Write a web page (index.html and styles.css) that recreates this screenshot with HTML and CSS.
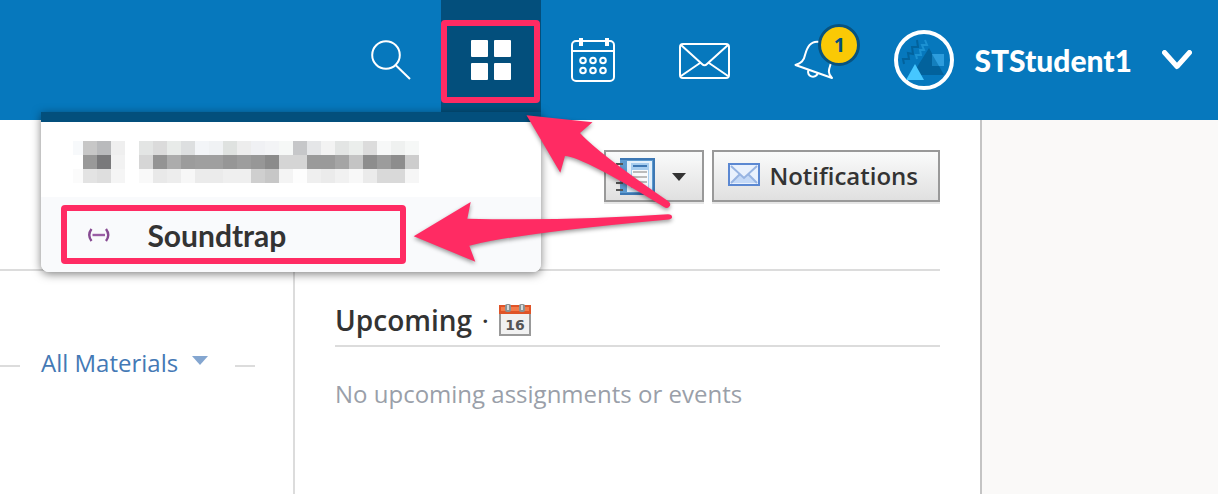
FILE: index.html
```html
<!DOCTYPE html>
<html lang="en">
<head>
  <meta charset="UTF-8">
  <meta name="viewport" content="width=device-width, initial-scale=1.0">
  <title>Course Materials</title>
  <link rel="stylesheet" href="styles.css">
</head>
<body>
  <header class="topbar">
    <nav class="nav">
      <button class="nav-btn search-btn" aria-label="Search">
        <svg width="40" height="40" viewBox="0 0 40 40" fill="none" stroke="#fff" stroke-width="2">
          <circle cx="15" cy="15" r="13.8"/>
          <path d="M24.500 25 L39 39"/>
        </svg>
      </button>

      <div class="nav-apps">
        <button class="nav-btn apps-btn" aria-label="Apps" aria-expanded="true">
          <svg width="40" height="40" viewBox="0 0 40 40" fill="#fff">
            <rect width="17" height="17" rx="1"/>
            <rect x="23" width="17" height="17" rx="1"/>
            <rect y="23" width="17" height="17" rx="1"/>
            <rect x="23" y="23" width="17" height="17" rx="1"/>
          </svg>
        </button>
        <span class="mark mark-apps"></span>

        <ul class="menu">
          <li>
            <a href="#" class="menu-item" aria-label="App">
              <svg class="mosaic" width="346" height="42" viewBox="0 0 346 42" shape-rendering="crispEdges">
                <path fill="#f7f9fb" d="M0 0h10v14H0z"/><path fill="#c7c7c7" d="M10 0h14v14H10z"/><path fill="#b9babc" d="M24 0h14v14H24z"/><path fill="#efefef" d="M38 0h14v14H38z"/>
                <path fill="#999" d="M10 14h14v14H10z"/><path fill="#79797b" d="M24 14h14v14H24z"/><path fill="#f2f2f2" d="M38 14h14v14H38z"/>
                <path fill="#fbfbfb" d="M0 28h10v14H0z"/><path fill="#e3e3e3" d="M10 28h14v14H10z"/><path fill="#dedede" d="M24 28h14v14H24z"/><path fill="#f5f5f5" d="M38 28h14v14H38z"/>

                <path fill="#e3e5e4" d="M66 0h14v14H66z"/><path fill="#dbdbdb" d="M80 0h14v14H80z"/><path fill="#e8ebe9" d="M94 0h14v14H94z"/><path fill="#dddfe0" d="M108 0h14v14h-14z"/><path fill="#f3f5f8" d="M122 0h14v14h-14z"/><path fill="#f0f2f4" d="M136 0h14v14h-14z"/><path fill="#dfe2e0" d="M150 0h14v14h-14z"/><path fill="#ededed" d="M164 0h14v14h-14z"/><path fill="#f0f1f4" d="M178 0h14v14h-14z"/><path fill="#f3f4f6" d="M192 0h14v14h-14z"/>
                <path fill="#f6f8f7" d="M206 0h14v14h-14z"/><path fill="#c6c7c9" d="M220 0h14v14h-14z"/><path fill="#e5e6e8" d="M234 0h14v14h-14z"/><path fill="#f3f3f3" d="M248 0h14v14h-14z"/><path fill="#e3e5e4" d="M262 0h14v14h-14z"/><path fill="#ebeeec" d="M276 0h14v14h-14z"/><path fill="#dcdcdc" d="M290 0h14v14h-14z"/><path fill="#f7f8f8" d="M304 0h14v14h-14z"/><path fill="#eff1f0" d="M318 0h14v14h-14z"/><path fill="#f6f8f7" d="M332 0h14v14h-14z"/>

                <path fill="#d6d6d6" d="M66 14h14v14H66z"/><path fill="#949494" d="M80 14h14v14H80z"/><path fill="#acacac" d="M94 14h14v14H94z"/><path fill="#9c9c9c" d="M108 14h14v14h-14z"/><path fill="#9f9f9f" d="M122 14h28v14h-28z"/><path fill="#969696" d="M150 14h14v14h-14z"/><path fill="#9d9d9d" d="M164 14h14v14h-14z"/><path fill="#979797" d="M178 14h14v14h-14z"/><path fill="#8b8b8b" d="M192 14h14v14h-14z"/>
                <path fill="#d5d5d5" d="M206 14h28v14h-28z"/><path fill="#9a9a9a" d="M234 14h28v14h-28z"/><path fill="#a5a5a5" d="M262 14h14v14h-14z"/><path fill="#c4c4c4" d="M276 14h14v14h-14z"/><path fill="#8d8d8d" d="M290 14h14v14h-14z"/><path fill="#9c9c9c" d="M304 14h14v14h-14z"/><path fill="#8d8d8d" d="M318 14h14v14h-14z"/><path fill="#cdcdcd" d="M332 14h14v14h-14z"/>

                <path fill="#f9f9f9" d="M66 28h14v14H66z"/><path fill="#e9e9e9" d="M80 28h14v14H80z"/><path fill="#ededed" d="M94 28h14v14H94z"/><path fill="#f7f7f7" d="M108 28h14v14h-14z"/><path fill="#ebebeb" d="M122 28h28v14h-28z"/><path fill="#efefef" d="M150 28h28v14h-28z"/><path fill="#cfcfcf" d="M178 28h14v14h-14z"/><path fill="#c7c7c7" d="M192 28h14v14h-14z"/>
                <path fill="#f4f4f4" d="M206 28h14v14h-14z"/><path fill="#fdfdfd" d="M220 28h14v14h-14z"/><path fill="#efefef" d="M234 28h14v14h-14z"/><path fill="#ebebeb" d="M248 28h14v14h-14z"/><path fill="#f1f1f1" d="M262 28h14v14h-14z"/><path fill="#f8f8f8" d="M276 28h14v14h-14z"/><path fill="#ebebeb" d="M290 28h14v14h-14z"/><path fill="#d9d9d9" d="M304 28h28v14h-28z"/><path fill="#f6f6f6" d="M332 28h14v14h-14z"/>
              </svg>
            </a>
          </li>
          <li>
            <a href="#" class="menu-item menu-item-active">
              <svg class="menu-icon" width="24" height="14" viewBox="0 0 24 14" fill="none" stroke="#874a92" stroke-width="2.400">
                <path d="M4.500 1 Q0 7 4.500 13 M19 1 Q23.500 7 19 13"/>
                <path d="M5.500 7 H18" stroke="#9a5ea5"/>
              </svg>
              <span>Soundtrap</span>
            </a>
            <span class="mark mark-soundtrap"></span>
          </li>
        </ul>

        <svg class="arrows" width="270" height="170" viewBox="410 110 270 170" fill="#ff2b63">
          <path d="M527.500 115.300 L593.500 122.300 L581 133 Q599 153 669 201 Q673 204 670 207 Q668 209 665 207 Q584 157 566 156 L561.300 172.700 Z"/>
          <path d="M414.700 236.300 L471.700 202 L468.300 218.700 Q570 221 669 214.300 Q673 214.500 673 217 Q673 219 670 219.400 Q520 233 470.300 245.700 L476.300 261.700 Z"/>
        </svg>
      </div>

      <button class="nav-btn calendar-btn" aria-label="Calendar">
        <svg width="44" height="44" viewBox="0 0 44 44" fill="none" stroke="#fff" stroke-width="2">
          <rect x="1" y="3" width="42" height="40" rx="4"/>
          <path d="M1 13 H43"/>
          <path d="M10 0 V8 M36 0 V8" stroke-width="4"/>
          <circle cx="12" cy="22.500" r="2.800"/><circle cx="22" cy="22.500" r="2.800"/><circle cx="32" cy="22.500" r="2.800"/>
          <circle cx="12" cy="32.500" r="2.800"/><circle cx="22" cy="32.500" r="2.800"/><circle cx="32" cy="32.500" r="2.800"/>
        </svg>
      </button>

      <button class="nav-btn mail-btn" aria-label="Messages">
        <svg width="51" height="36" viewBox="0 0 51 36" fill="none" stroke="#fff" stroke-width="2">
          <rect x="1" y="1" width="49" height="34" rx="3"/>
          <path d="M2 2 L23 21 Q25.500 23.500 28 21 L49 2 M2 33 L21 20 M49 33 L30 20"/>
        </svg>
      </button>

      <button class="nav-btn bell-btn" aria-label="Notifications, 1 new">
        <svg width="40" height="40" viewBox="0 0 40 40" fill="none" stroke="#fff" stroke-width="2" stroke-linejoin="round">
          <path d="M26 2 C16 0 13 8 11 15 C10 21 7 23 1.500 25 L38 38 C33 33 35 29 37 23"/>
          <path d="M14.500 30 C12 36 21 40 24 33"/>
        </svg>
        <span class="badge">1</span>
      </button>

      <button class="nav-btn user-btn">
        <svg width="60" height="60" viewBox="0 0 60 60">
          <circle cx="30" cy="30" r="28" fill="#0678bd" stroke="#fff" stroke-width="4"/>
          <path d="M35 18 L50 45 H18 Z" fill="#02629c"/>
          <path d="M38 24 H50 V36 H38 Z" fill="#2d9ddd"/>
          <path d="M38 24 L45 36 H38 Z" fill="#147fbd"/>
          <path d="M21 34 L30 50 H12 Z" fill="#46c7ff"/>
          <path d="M10 34 L9 29 L15 29 L14 23 L19 24 L18 17 L24 17 L23 10" fill="none" stroke="#02629c" stroke-width="2"/>
          <path d="M23 29 L22 25 L27 25 L26 20 L30 20 L28 15 L33 15 L31 10" fill="none" stroke="#1b91d2" stroke-width="2"/>
        </svg>
        <span class="user-name">STStudent1</span>
        <svg width="30" height="20" viewBox="0 0 30 20" fill="none" stroke="#fff" stroke-width="5" stroke-linecap="round" stroke-linejoin="round">
          <path d="M2.500 2.500 L15 16.500 L27.500 2.500"/>
        </svg>
      </button>
    </nav>
  </header>

  <main class="page">
    <div class="content">
      <div class="toolbar">
        <button class="btn btn-course" aria-label="Course options">
          <svg width="40" height="38" viewBox="0 0 40 38">
            <rect x="4" y="1" width="34" height="35" fill="#5d9bd0"/>
            <path d="M4 1 H38 V36 H4" fill="none" stroke="#3d78b4" stroke-width="2"/>
            <rect x="11" y="3" width="25" height="31" fill="#e4f1fb"/>
            <rect x="15" y="5" width="18" height="25" fill="#a6cdef"/>
            <rect x="16" y="12" width="16" height="17" fill="#f8fafc"/>
            <path d="M17 8 H31" stroke="#3d78b4" stroke-width="2"/>
            <path d="M17 14 H31 M17 19 H31 M17 24 H31" stroke="#bbb" stroke-width="2"/>
            <path d="M0 6 H7 M0 13 H7 M0 25 H7 M0 32 H7" stroke="#555" stroke-width="2"/>
          </svg>
          <svg width="14" height="8" viewBox="0 0 14 8"><path d="M0 0 H14 L7 8 Z" fill="#333"/></svg>
        </button>
        <button class="btn btn-notify">
          <svg width="32" height="24" viewBox="0 0 32 24">
            <rect x="1" y="1" width="30" height="21" fill="#e9f1fd" stroke="#5b88d2" stroke-width="2"/>
            <path d="M3 20 L12 11 L16 14 L20 11 L29 20 Z" fill="#c4d9f7"/>
            <path d="M3 3 L16 15 L29 3 M3 20 L12 11 M29 20 L20 11" fill="none" stroke="#97b4e2" stroke-width="2"/>
          </svg>
          Notifications
        </button>
      </div>

      <div class="columns">
        <section class="materials">
          <div class="filter">
            <a href="#" class="filter-link">All Materials
              <svg width="16" height="9" viewBox="0 0 16 9"><path d="M0 0 H16 L8 9 Z" fill="#84a6d0"/></svg>
            </a>
          </div>
        </section>
        <aside class="upcoming">
          <h2 class="upcoming-title">Upcoming <span class="dot">·</span>
            <svg width="32" height="32" viewBox="0 0 32 32">
              <rect x="1" y="9" width="30" height="22" fill="#f1f1f1" stroke="#999" stroke-width="2"/>
              <rect y="1" width="32" height="9" fill="#df5428"/>
              <rect x="2" y="3" width="28" height="4" fill="#f47b4b"/>
              <rect x="6" y="0" width="6" height="8" rx="2" fill="#8b9294"/><rect x="8" y="1" width="2" height="5" fill="#d5dadb"/>
              <rect x="20" y="0" width="6" height="8" rx="2" fill="#8b9294"/><rect x="22" y="1" width="2" height="5" fill="#d5dadb"/>
              <text x="16" y="26" class="cal-day" text-anchor="middle">16</text>
            </svg>
          </h2>
          <p class="upcoming-empty">No upcoming assignments or events</p>
        </aside>
      </div>
    </div>
    <div class="gutter"></div>
  </main>
</body>
</html>
```
FILE: styles.css
```css
* {
  margin: 0;
  padding: 0;
  box-sizing: border-box;
}

body {
  display: flex;
  flex-direction: column;
  min-height: 100vh;
  font-family: 'Open Sans', 'Noto Sans', sans-serif;
  font-size: 24px;
  color: #333;
  background-color: #fff;
}

button {
  font: inherit;
  color: inherit;
  border: none;
  background: none;
  cursor: pointer;
}

a {
  text-decoration: none;
}

svg {
  display: block;
  flex-shrink: 0;
}

/* Top bar */
.topbar {
  position: relative;
  z-index: 2;
  background-color: #0678bd;
}

.nav {
  display: flex;
  justify-content: flex-end;
  height: 120px;
}

.nav-btn {
  position: relative;
  display: flex;
  align-items: center;
  height: 100%;
  padding: 0 30px;
}

.nav-apps {
  position: relative;
}

.apps-btn {
  background-color: #034f7c;
}

.mail-btn {
  padding: 2px 34px 0;
}

.bell-btn {
  width: 126px;
}

.badge {
  position: absolute;
  top: 24px;
  left: 54px;
  width: 42px;
  height: 42px;
  border: 3px solid #08527e;
  border-radius: 50%;
  background-color: #fac905;
  color: #034f7c;
  font-size: 20px;
  font-weight: 700;
  line-height: 36px;
}

.user-btn {
  gap: 20px;
  padding: 0 26px 0 4px;
}

.user-name {
  margin-right: 10px;
  font-family: Lato, sans-serif;
  font-size: 30px;
  font-weight: 900;
  color: #fff;
}

/* Apps menu */
.menu {
  position: absolute;
  top: 112px;
  right: 0;
  width: 500px;
  border-top: 10px solid #034f7c;
  border-radius: 0 0 8px 8px;
  background-color: #fff;
  box-shadow: 0 2px 10px rgba(0, 0, 0, 0.5);
  list-style: none;
}

.menu li {
  position: relative;
}

.menu-item {
  display: flex;
  align-items: center;
  gap: 36px;
  height: 75px;
  padding: 0 46px;
  font-family: Lato, sans-serif;
  font-size: 30px;
  font-weight: 700;
  color: #333;
}

.menu-item-active {
  border-radius: 0 0 8px 8px;
  background-color: #f9fafc;
}

.mosaic {
  margin: 4px 0 0 -14px;
}

/* Highlights and arrows */
.mark {
  position: absolute;
  border: 6px solid #ff2b63;
  border-radius: 4px;
  pointer-events: none;
}

.mark-apps {
  top: 20px;
  left: 0;
  width: 99px;
  height: 83px;
}

.mark-soundtrap {
  top: 8px;
  left: 20px;
  width: 345px;
  height: 59px;
}

.arrows {
  position: absolute;
  top: 110px;
  left: -32px;
  filter: drop-shadow(0 2px 2px rgba(0, 0, 0, 0.4));
  pointer-events: none;
}

/* Page */
.page {
  display: flex;
  flex: 1;
}

.content {
  display: flex;
  flex: 1;
  flex-direction: column;
  padding-right: 40px;
  border-right: 2px solid #c4c4c4;
}

.gutter {
  width: 236px;
  background-color: #faf9f8;
}

.toolbar {
  display: flex;
  justify-content: flex-end;
  gap: 8px;
  padding: 30px 0 67px;
  border-bottom: 2px solid #dcdcdc;
}

.btn {
  display: flex;
  align-items: center;
  height: 52px;
  border: 2px solid #999;
  background: linear-gradient(#fafbfb, #e0e0e0);
  box-shadow: 0 2px 0 #e6e6e6;
  font-weight: 600;
}

.btn-course {
  gap: 16px;
  padding: 2px 16px 0 10px;
}

.btn-notify {
  gap: 9px;
  padding: 0 20px 2px 14px;
}

.columns {
  display: flex;
  flex: 1;
}

.materials {
  width: 295px;
  padding: 75px 38px 0 0;
  border-right: 2px solid #dcdcdc;
}

.filter {
  display: flex;
  align-items: center;
}

.filter::before,
.filter::after {
  content: "";
  width: 20px;
  height: 2px;
  margin-top: 6px;
  background-color: #dcdcdc;
}

.filter-link {
  display: flex;
  flex: 1;
  align-items: center;
  gap: 14px;
  padding-left: 21px;
  line-height: 34px;
  color: #4479b5;
}

.filter-link svg {
  margin-bottom: 6px;
}

.upcoming {
  flex: 1;
  padding: 26px 0 0 40px;
}

.upcoming-title {
  display: flex;
  align-items: center;
  gap: 10px;
  height: 50px;
  padding-bottom: 2px;
  border-bottom: 2px solid #dcdcdc;
  font-size: 28px;
  font-weight: 600;
}

.dot {
  font-size: 24px;
}

.cal-day {
  font-family: 'DejaVu Sans', sans-serif;
  font-size: 14px;
  font-weight: 700;
  fill: #555;
}

.upcoming-empty {
  margin-top: 30px;
  line-height: 34px;
  color: #9a9fa9;
}
```
